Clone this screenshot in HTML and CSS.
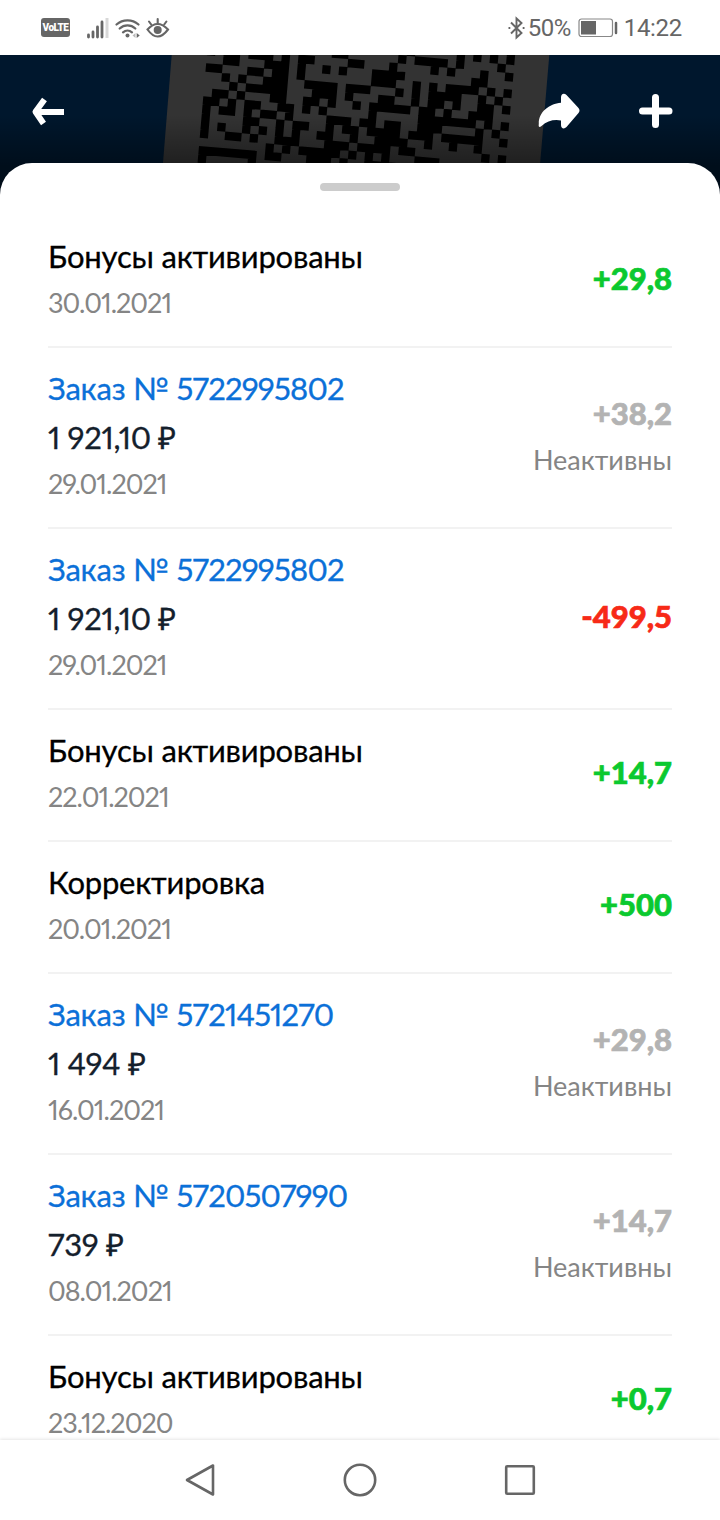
FILE: index.html
```html
<!DOCTYPE html>
<html lang="ru">
<head>
  <meta charset="UTF-8">
  <title>История бонусов</title>
  <link rel="stylesheet" href="styles.css">
</head>
<body>
  <div class="phone">
    <!-- Статус-бар -->
    <div class="status-bar">
      <div class="status-left">
        <span class="volte">VoLTE</span>
        <svg class="signal" width="22" height="22" viewBox="0 0 22 22">
          <path d="M1.5 20v-2M6 20v-5M10.5 20v-10M15 20V5" stroke="#666" stroke-width="2.8" stroke-linecap="round"/>
          <path d="M20 21V1" stroke="#d8d8d8" stroke-width="3"/>
        </svg>
        <svg class="wifi" width="26" height="22" viewBox="0 0 26 22" fill="none" stroke="#666" stroke-width="2.2" stroke-linecap="round">
          <path d="M1.5 7.5a16.5 16.5 0 0 1 22 0M4.7 11.5a11.5 11.5 0 0 1 15.6 0M8 15.3a7 7 0 0 1 9 0"/>
          <circle cx="12.5" cy="18.5" r="2" fill="#666" stroke="none"/>
          <path d="M20.5 16v5l-3-2.5z" fill="#bbb" stroke="none"/>
          <path d="M21.7 16v5l3-2.5z" fill="#666" stroke="none"/>
        </svg>
        <svg class="eye" width="24" height="22" viewBox="0 0 24 22" fill="none" stroke="#666" stroke-width="2.1" stroke-linecap="round">
          <path d="M1.5 12.5Q11.5 1.5 22 12.5Q11.5 26.5 1.5 12.5z"/>
          <path d="M11.7 2v4M3 4.5l2.2 3M20.4 4.5l-2.2 3"/>
          <circle cx="11.7" cy="13" r="4" fill="#666" stroke="none"/>
        </svg>
      </div>
      <div class="status-right">
        <svg width="17" height="24" viewBox="0 0 17 24" fill="none" stroke="#666" stroke-width="1.9">
          <path d="M3 6.5l10.500 10.500-5 4.500v-19l5 4.500L3 17.500"/>
          <path d="M.5 12h1.800M14.700 12h1.800" stroke-width="2"/>
        </svg>
        <span class="battery-text">50%</span>
        <svg class="battery" width="40" height="20" viewBox="0 0 40 20">
          <rect x="1" y="1" width="33.5" height="17.5" rx="2.5" fill="none" stroke="#888" stroke-width="1.2"/>
          <rect x="3" y="3" width="15" height="13.5" fill="#666"/>
          <path d="M38 5v10" stroke="#666" stroke-width="2.5" stroke-linecap="round"/>
        </svg>
        <span class="clock">14:22</span>
      </div>
    </div>

    <!-- Шапка с затемнённым кодом карты -->
    <header class="header">
      <svg class="code" width="720" height="145" viewBox="0 0 720 145">
        <path d="M171.7 0H549.3L537 145H160z" fill="#333"/>
        <g transform="translate(199 91) rotate(4.95) scale(8.3) translate(0 .5)">
          <path stroke="#000" stroke-width="1.03" d="
            M36-15h1
            M24-14h1M30-14h1M32-14h1M34-14h1M36-14h1
            M15-13h2M23-13h1M25-13h4M30-13h1M35-13h1
            M0-12h1M2-12h2M5-12h3M9-12h1M11-12h2M17-12h2M22-12h1M27-12h1M29-12h1M33-12h1M36-12h1
            M2-11h2M7-11h3M11-11h1M14-11h1M16-11h1M20-11h4M32-11h2
            M0-10h2M5-10h2M8-10h2M11-10h1M20-10h3M25-10h1M27-10h1M29-10h4M34-10h1M36-10h1
            M2-9h1M4-9h1M7-9h3M12-9h4M17-9h3M23-9h1M25-9h1M27-9h4M33-9h1M35-9h1
            M3-8h1M5-8h5M13-8h3M17-8h1M21-8h2M25-8h1M27-8h2M30-8h1M33-8h2M36-8h1
            M1-7h2M4-7h1M8-7h2M12-7h2M15-7h1M18-7h1M20-7h5M26-7h2M29-7h1M32-7h3
            M0-6h2M3-6h1M5-6h2M9-6h2M12-6h1M14-6h1M20-6h1M26-6h7M34-6h1M36-6h1
            M0-5h1M2-5h2M5-5h1M7-5h2M10-5h1M15-5h3M19-5h2M22-5h2M26-5h3M33-5h1M35-5h1
            M0-4h1M5-4h2M9-4h1M11-4h2M15-4h1M17-4h2M20-4h4M25-4h3M29-4h5M36-4h1
            M0-3h1M2-3h1M5-3h1M7-3h1M9-3h1M11-3h1M14-3h2M18-3h1M21-3h4M27-3h1M30-3h1M33-3h1
            M0-2h1M3-2h2M6-2h1M9-2h3M15-2h3M19-2h4M24-2h2M34-2h1M36-2h1
            M8-1h1M10-1h1M12-1h5M18-1h1M20-1h1M22-1h1M26-1h3
            M0 0h7M8 0h2M13 0h3M17 0h1M20 0h5
            M0 1h1M6 1h1"/>
        </g>
      </svg>
      <svg class="back" width="36" height="32" viewBox="0 0 36 32" fill="none" stroke="#fff" stroke-width="6">
        <path d="M33 16H6" stroke-linecap="butt"/>
        <path d="M13.5 3.500L4.500 15.800L12.500 27.500" stroke-linejoin="round"/>
      </svg>
      <div class="actions">
        <svg width="44" height="40" viewBox="0 1 44 40">
          <path d="M24 5.500c0-4 3-5 5.500-2.500l12 13q2 2.500 0 5l-12 14c-2.500 2.500-5.500 1.500-5.500-2v-4.500q-11-2-19.500 5.500c-2.200 1.700-3.200 1-2.700-2C1.500 20 12 12 24 10.800z" fill="#fff"/>
        </svg>
        <svg width="36" height="36" viewBox="0 0 36 36">
          <path d="M17.5 4.500v27M4.500 18h26.500" stroke="#fff" stroke-width="7" stroke-linecap="round"/>
        </svg>
      </div>
    </header>

    <!-- Список операций -->
    <main class="sheet">
      <div class="handle"></div>
      <ul class="operations">
        <li class="operation">
          <div class="info">
            <div class="title">Бонусы активированы</div>
            <div class="date">30.01.2021</div>
          </div>
          <div class="bonus plus">+29,8</div>
        </li>
        <li class="operation">
          <div class="info">
            <div class="order">Заказ № <span class="number">5722995802</span></div>
            <div class="sum">1 921,10 ₽</div>
            <div class="date">29.01.2021</div>
          </div>
          <div class="bonus inactive">+38,2<span class="state">Неактивны</span></div>
        </li>
        <li class="operation">
          <div class="info">
            <div class="order">Заказ № <span class="number">5722995802</span></div>
            <div class="sum">1 921,10 ₽</div>
            <div class="date">29.01.2021</div>
          </div>
          <div class="bonus minus">-499,5</div>
        </li>
        <li class="operation">
          <div class="info">
            <div class="title">Бонусы активированы</div>
            <div class="date">22.01.2021</div>
          </div>
          <div class="bonus plus">+14,7</div>
        </li>
        <li class="operation">
          <div class="info">
            <div class="title">Корректировка</div>
            <div class="date">20.01.2021</div>
          </div>
          <div class="bonus plus">+500</div>
        </li>
        <li class="operation">
          <div class="info">
            <div class="order">Заказ № <span class="number">5721451270</span></div>
            <div class="sum">1 494 ₽</div>
            <div class="date">16.01.2021</div>
          </div>
          <div class="bonus inactive">+29,8<span class="state">Неактивны</span></div>
        </li>
        <li class="operation">
          <div class="info">
            <div class="order">Заказ № <span class="number">5720507990</span></div>
            <div class="sum">739 ₽</div>
            <div class="date">08.01.2021</div>
          </div>
          <div class="bonus inactive">+14,7<span class="state">Неактивны</span></div>
        </li>
        <li class="operation">
          <div class="info">
            <div class="title">Бонусы активированы</div>
            <div class="date">23.12.2020</div>
          </div>
          <div class="bonus plus">+0,7</div>
        </li>
      </ul>
    </main>

    <!-- Навигация -->
    <nav class="nav-bar">
      <svg width="36" height="36" viewBox="0 0 36 36"><path d="M31 3.5v29L5 18z"/></svg>
      <svg width="36" height="36" viewBox="0 0 36 36"><circle cx="18" cy="18" r="15.2"/></svg>
      <svg width="36" height="36" viewBox="0 0 36 36"><rect x="4.2" y="4.2" width="27.6" height="27.6" rx="1"/></svg>
    </nav>
  </div>
</body>
</html>
```
FILE: styles.css
```css
body { margin: 0; background: #fff; font-family: Lato, "Open Sans", sans-serif; }
.phone {
  display: flex;
  flex-direction: column;
  width: 720px;
  height: 1520px;
  overflow: hidden;
}

/* Статус-бар */
.status-bar {
  display: flex;
  justify-content: space-between;
  align-items: center;
  height: 55px;
  flex-shrink: 0;
  padding: 0 38px 0 41px;
  box-sizing: border-box;
  font-family: Roboto, sans-serif;
  font-size: 24px;
  color: #666;
}
.status-left, .status-right { display: flex; align-items: center; }
.volte {
  width: 29px;
  height: 19px;
  border-radius: 3px;
  background: #666;
  color: #fff;
  font: 900 10px/19px Roboto, sans-serif;
  letter-spacing: -0.5px;
  text-align: center;
}
.signal { margin-left: 17px; }
.wifi { margin-left: 6px; }
.eye { margin-left: 5px; }
.battery-text { margin-left: 3px; letter-spacing: -0.5px; }
.battery { margin: 0 6px 0 7px; }
.clock { letter-spacing: -0.3px; }

/* Шапка */
.header {
  position: relative;
  display: flex;
  justify-content: space-between;
  align-items: flex-start;
  height: 108px;
  flex-shrink: 0;
  padding: 38px 46px 0 31px;
  box-sizing: border-box;
  background: #00172d;
}
.header::after {
  content: "";
  position: absolute;
  left: 0;
  top: 60px;
  width: 100%;
  height: 85px;
  background: linear-gradient(rgba(0, 0, 0, 0), rgba(0, 0, 0, 0.4) 60%, rgba(0, 0, 0, 0.5));
}
.code { position: absolute; left: 0; top: 0; background: #00172d; }
.back, .actions { position: relative; z-index: 1; }
.back { margin-top: 3px; }
.actions { display: flex; align-items: flex-start; gap: 57px; }

/* Шторка со списком */
.sheet {
  position: relative;
  z-index: 2;
  flex: 1;
  min-height: 0;
  overflow: hidden;
  background: #fff;
  border-radius: 32px 32px 0 0;
}
.handle {
  width: 80px;
  height: 8px;
  margin: 20px auto 25px;
  border-radius: 4px;
  background: #ccc;
}
.operations {
  list-style: none;
  margin: 0;
  padding: 0 48px;
  font-variant-numeric: proportional-nums;
}
.operation {
  display: flex;
  justify-content: space-between;
  align-items: center;
  border-bottom: 2px solid #f2f2f2;
  padding: 20px 0 23px;
}
.title, .order, .sum {
  font-size: 31px;
  line-height: 40px;
  white-space: nowrap;
  -webkit-text-stroke: 0.3px;
}
.title { color: #000; letter-spacing: -0.2px; }
.order { color: #0b70d8; margin-bottom: 9px; letter-spacing: -0.2px; }
.number { letter-spacing: -0.8px; }
.sum { color: #14202c; letter-spacing: -0.3px; }
.date {
  margin-top: 7px;
  font-size: 27px;
  line-height: 40px;
  letter-spacing: -1px;
  color: #858585;
}
.bonus {
  font-size: 31px;
  line-height: 40px;
  font-weight: 900;
  font-variant-numeric: tabular-nums;
  -webkit-text-stroke: 0.7px;
  text-align: right;
  padding-bottom: 4px;
}
.plus { color: #0bc92f; }
.minus { color: #f72a17; padding-bottom: 2px; }
.inactive { color: #b3b3b3; padding-bottom: 0; }
.state {
  display: block;
  margin-top: 7px;
  font-size: 27px;
  font-weight: 400;
  -webkit-text-stroke: 0;
  color: #858585;
}

/* Навигация */
.nav-bar {
  position: relative;
  z-index: 3;
  display: flex;
  justify-content: center;
  align-items: center;
  gap: 124px;
  height: 80px;
  flex-shrink: 0;
  background: #fff;
  box-shadow: 0 -1px 3px rgba(0, 0, 0, 0.1);
}
.nav-bar svg {
  fill: none;
  stroke: #666;
  stroke-width: 2.6;
  stroke-linejoin: round;
}
```
